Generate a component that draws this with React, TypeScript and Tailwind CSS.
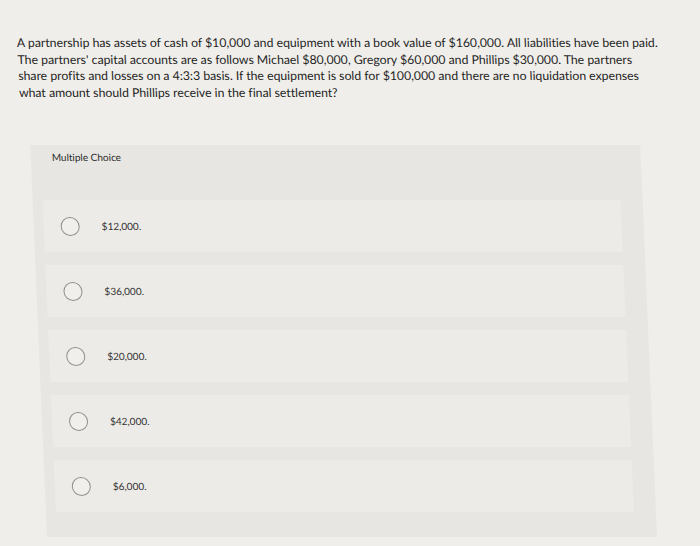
import React from "react";

const options = ["$12,000.", "$36,000.", "$20,000.", "$42,000.", "$6,000."];

const lines = [
  "A partnership has assets of cash of $10,000 and equipment with a book value of $160,000. All liabilities have been paid.",
  "The partners' capital accounts are as follows Michael $80,000, Gregory $60,000 and Phillips $30,000. The partners",
  "share profits and losses on a 4:3:3 basis. If the equipment is sold for $100,000 and there are no liquidation expenses",
  "what amount should Phillips receive in the final settlement?",
];

export default function App() {
  return (
    <div className="w-[700px] h-[546px] overflow-hidden bg-[#efeeea] font-['Lato',sans-serif] text-[#1f1f1f] [font-variant-ligatures:none]">
      <div className="skew-x-[2.45deg] origin-top-left pt-[35px] pl-[15px]">
        <div className="text-[12.25px] leading-[16.5px]">
          {lines.map((l) => (
            <div key={l} className="whitespace-nowrap">{l}</div>
          ))}
        </div>
        <div className="mt-[44px] ml-[9px] w-[610px] h-[392px] bg-[#e7e6e2] pt-[5px]">
          <div className="pl-[21px] text-[10px] leading-[14px] text-[#2b2b2b]">Multiple Choice</div>
          <div className="mt-[36px] flex flex-col gap-[13px] pl-[10px] pr-[22px]">
            {options.map((o) => (
              <div key={o} className="h-[52px] bg-[#ecebe7] flex items-center pl-[17px]">
                <span className="w-[19px] h-[19px] rounded-full border border-[#8f8f8f] bg-[#f0efeb]" />
                <span className="ml-[22px] text-[10px] text-[#333]">{o}</span>
              </div>
            ))}
          </div>
        </div>
      </div>
    </div>
  );
}
